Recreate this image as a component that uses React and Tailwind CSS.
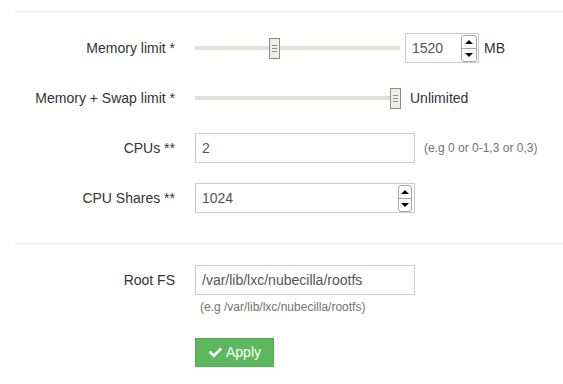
import React from 'react';
import { FaCheck } from 'react-icons/fa';

function Slider({ pos }) {
  return (
    <div className="relative flex items-center w-[205px] h-[21px] flex-none">
      <div className="w-full h-[4px] bg-[#e2dfd9]" />
      {/* thumb */}
      <div
        className="absolute top-0 w-[11px] h-[21px] bg-[#efede9] border border-[#8f8b85] flex flex-col items-center justify-center gap-[2px]"
        style={{ left: pos }}
      >
        <div className="w-[5px] h-px bg-[#8f8b85]" />
        <div className="w-[5px] h-px bg-[#8f8b85]" />
        <div className="w-[5px] h-px bg-[#8f8b85]" />
      </div>
    </div>
  );
}

function Spinner({ w }) {
  return (
    <div className={`${w} h-[27px] flex-none flex flex-col border border-[#a7a7a7] rounded-[3px] bg-white overflow-hidden`}>
      <div className="flex-1 flex items-center justify-center border-b border-[#a7a7a7]">
        <div className="w-0 h-0 border-l-[4px] border-r-[4px] border-b-[4px] border-l-transparent border-r-transparent border-b-black" />
      </div>
      <div className="flex-1 flex items-center justify-center">
        <div className="w-0 h-0 border-l-[4px] border-r-[4px] border-t-[4px] border-l-transparent border-r-transparent border-t-black" />
      </div>
    </div>
  );
}

function Row({ label, children }) {
  return (
    <div className="flex items-center h-[30px] mb-[20px]">
      <div className="w-[160px] text-right flex-none">{label}</div>
      <div className="ml-[20px] flex items-center">{children}</div>
    </div>
  );
}

export default function App() {
  return (
    <div className="w-[563px] h-[384px] bg-white overflow-hidden pt-[11px] pl-[15px] text-[14px] text-[#333] font-['Liberation_Sans',Arial,sans-serif]">
      <div className="border-t border-[#e5e5e5]" />

      <div className="pt-[21px]">
        <Row label="Memory limit *">
          <Slider pos={74} />
          <div className="ml-[5px] w-[74px] h-[30px] border border-[#ccc] flex items-center pl-[6px] pr-[1px] text-[#555]">
            <span className="flex-1">1520</span>
            <Spinner w="w-[16px]" />
          </div>
          <span className="ml-[5px]">MB</span>
        </Row>

        <Row label="Memory + Swap limit *">
          <Slider pos={195} />
          <span className="ml-[10px]">Unlimited</span>
        </Row>

        <Row label="CPUs **">
          <div className="w-[220px] h-[30px] border border-[#ccc] flex items-center pl-[6px] text-[#555]">2</div>
          <span className="ml-[9px] text-[12px] text-[#737373]">(e.g 0 or 0-1,3 or 0,3)</span>
        </Row>

        <Row label="CPU Shares **">
          <div className="w-[220px] h-[30px] border border-[#ccc] flex items-center pl-[6px] pr-[2px] text-[#555]">
            <span className="flex-1">1024</span>
            <Spinner w="w-[14px]" />
          </div>
        </Row>
      </div>

      <div className="mt-[30px] border-t border-[#e5e5e5]" />

      <div className="pt-[21px] flex">
        <div className="w-[160px] flex-none text-right h-[30px] flex items-center justify-end">Root FS</div>
        <div className="ml-[20px] flex flex-col items-start">
          <div className="w-[220px] h-[30px] border border-[#ccc] flex items-center pl-[6px] text-[#555]">
            /var/lib/lxc/nubecilla/rootfs
          </div>
          <div className="mt-[5px] pl-[5px] text-[12px] text-[#737373] leading-[14px]">
            (e.g /var/lib/lxc/nubecilla/rootfs)
          </div>
          <button className="mt-[24px] w-[79px] h-[29px] bg-[#5cb85c] border border-[#4cae4c] text-white flex items-center pl-[13px] gap-[4px]">
            <FaCheck className="w-[13px] h-[13px]" />
            <span>Apply</span>
          </button>
        </div>
      </div>
    </div>
  );
}
